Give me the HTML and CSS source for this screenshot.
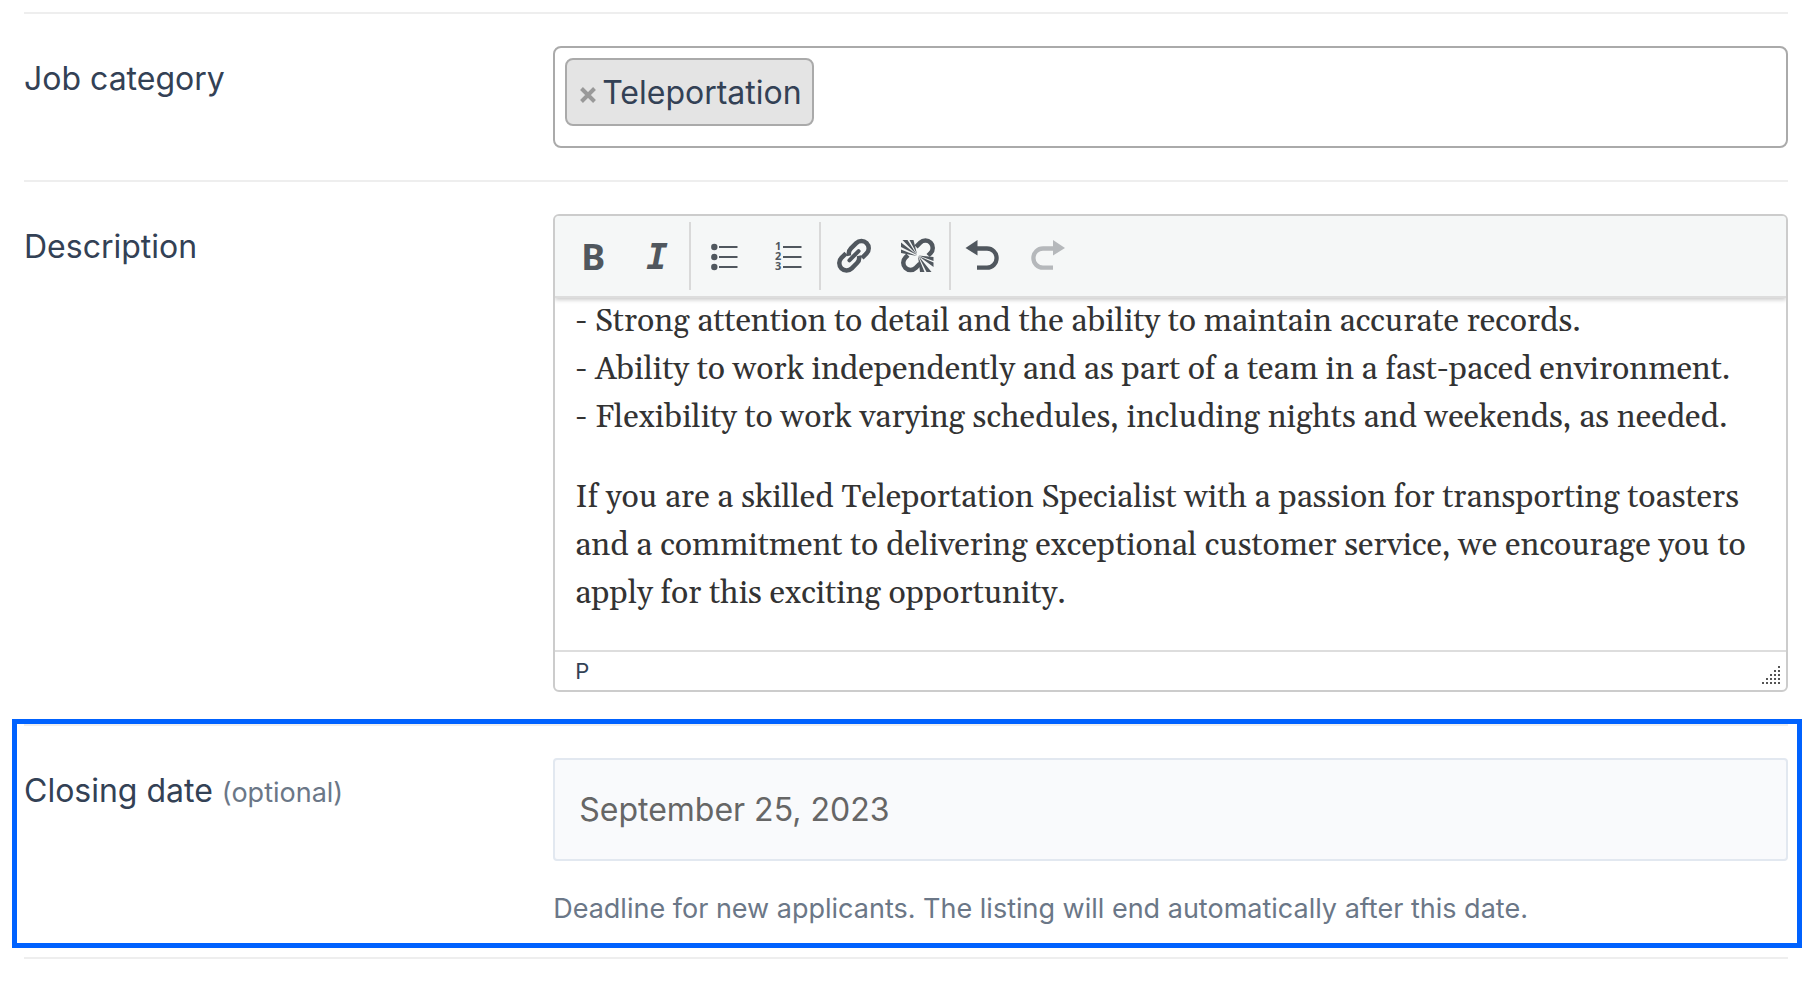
FILE: index.html
```
<!DOCTYPE html>
<html lang="en">
<head>
<meta charset="utf-8">
<title>Job listing</title>
<link rel="stylesheet" href="styles.css">
</head>
<body>
<form class="form">
  <div class="row">
    <span class="label" id="category-label">Job category</span>
    <div class="field">
      <ul class="tags" aria-labelledby="category-label">
        <li class="tag">
          <button class="tag-remove" type="button" aria-label="Remove Teleportation">
            <svg class="tag-icon" viewBox="0 0 16 16"><path d="M1.500 1.500L14.500 14.500M14.500 1.500L1.500 14.500" stroke="#999" stroke-width="4"/></svg>
          </button>
          <span>Teleportation</span>
        </li>
      </ul>
    </div>
  </div>

  <div class="row">
    <span class="label" id="description-label">Description</span>
    <div class="field">
      <div class="editor">
        <div class="toolbar" role="toolbar" aria-label="Formatting">
          <div class="group">
            <button class="tool tool-bold" type="button" aria-label="Bold">B</button>
            <button class="tool tool-italic" type="button" aria-label="Italic">I</button>
          </div>
          <div class="group">
            <button class="tool" type="button" aria-label="Bulleted list">
              <svg class="icon" viewBox="0 0 40 40"><g fill="currentColor"><circle cx="11.300" cy="11" r="3.200"/><circle cx="11.300" cy="21" r="3.200"/><circle cx="11.300" cy="31" r="3.200"/></g><path d="M16 11H34.500M16 21H34.500M16 31H34.500" stroke="currentColor" stroke-width="2"/></svg>
            </button>
            <button class="tool" type="button" aria-label="Numbered list">
              <svg class="icon" viewBox="0 0 40 40"><g class="icon-digits" fill="currentColor"><text x="8" y="14">1</text><text x="8" y="24">2</text><text x="8" y="34">3</text></g><path d="M16 11H34.500M16 21H34.500M16 31H34.500" stroke="currentColor" stroke-width="2"/></svg>
            </button>
          </div>
          <div class="group">
            <button class="tool" type="button" aria-label="Insert link">
              <svg class="icon" viewBox="0 0 40 40"><g transform="translate(21 19.700) rotate(-45)" fill="none" stroke="currentColor" stroke-width="4.500"><path d="M-3.500 -3.500C-2 -6 0 -7.300 3 -7.300H10.500A7.300 7.300 0 0 1 10.500 7.300H4"/><path d="M3.500 3.500C2 6 0 7.300 -3 7.300H-10.500A7.300 7.300 0 0 1 -10.500 -7.300H-4"/><path d="M-6.500 0H6.500" stroke-linecap="round" stroke-width="4"/></g></svg>
            </button>
            <button class="tool" type="button" aria-label="Remove link">
              <svg class="icon" viewBox="0 0 40 40"><g transform="translate(21 19.300) rotate(-45)" fill="none" stroke="currentColor" stroke-width="4.500"><path d="M4.500 -7.300H10.500A7.300 7.300 0 0 1 10.500 7.300H7"/><path d="M-4.500 7.300H-10.500A7.300 7.300 0 0 1 -10.500 -7.300H-7"/></g><path fill="currentColor" d="M20 20L4 17V13.500ZM20 19L4 11V6.500ZM20 19L5.500 4H10.500ZM20 18L12.500 4H16.500ZM21.500 19.500L36.500 21V25ZM21.500 20L36.500 26.500V31ZM21.500 20L34.500 36H29.500ZM21 20L27.500 36H23Z"/></svg>
            </button>
          </div>
          <div class="group">
            <button class="tool" type="button" aria-label="Undo">
              <svg class="icon" viewBox="0 0 40 40"><path fill="currentColor" d="M2.500 12L14.500 4V19.500Z"/><path d="M13 12.500H24A9.600 9.600 0 0 1 24 31.700H14" fill="none" stroke="currentColor" stroke-width="4.300"/></svg>
            </button>
            <button class="tool" type="button" aria-label="Redo" disabled>
              <svg class="icon" viewBox="0 0 40 40"><path fill="currentColor" d="M38 12L26 4V10.300H16V14.700H26V19.500Z"/><path d="M16 12.500A9.600 9.600 0 0 0 16 31.700H26" fill="none" stroke="currentColor" stroke-width="4.300"/></svg>
            </button>
          </div>
        </div>
        <div class="content" role="textbox" aria-multiline="true" aria-labelledby="description-label" contenteditable="true" spellcheck="false">
          <p>- Strong attention to detail and the ability to maintain accurate records.<br>- Ability to work independently and as part of a team in a fast-paced environment.<br>- Flexibility to work varying schedules, including nights and weekends, as needed.</p>
          <p>If you are a skilled Teleportation Specialist with a passion for transporting toasters and a commitment to delivering exceptional customer service, we encourage you to apply for this exciting opportunity.</p>
        </div>
        <div class="status">
          <span>P</span>
          <svg class="grip" viewBox="0 0 18 18"><path fill="#555" d="M16 0h2v2h-2zM12 4h2v2h-2zM16 4h2v2h-2zM8 8h2v2h-2zM12 8h2v2h-2zM16 8h2v2h-2zM4 12h2v2h-2zM8 12h2v2h-2zM12 12h2v2h-2zM16 12h2v2h-2zM0 16h2v2h-2zM4 16h2v2h-2zM8 16h2v2h-2zM12 16h2v2h-2zM16 16h2v2h-2z"/></svg>
        </div>
      </div>
    </div>
  </div>

  <div class="row row-highlight">
    <label class="label" for="closing-date">Closing date <small class="optional">(optional)</small></label>
    <div class="field">
      <input class="date" id="closing-date" type="text" value="September 25, 2023" aria-describedby="closing-help">
      <p class="help" id="closing-help">Deadline for new applicants. The listing will end automatically after this date.</p>
    </div>
  </div>
</form>
</body>
</html>
```

FILE: styles.css
```
* {
  box-sizing: border-box;
}

body {
  margin: 0;
  background: #fff;
  color: #334155;
  font-family: Inter, "Liberation Sans", sans-serif;
  font-size: 32px;
  line-height: 48px;
}

button {
  margin: 0;
  padding: 0;
  border: 0;
  background: none;
  color: inherit;
  font: inherit;
}

.form {
  margin: 12px 26px 0 24px;
  border-top: 2px solid #eee;
}

.row {
  display: grid;
  grid-template-columns: 30% 1fr;
  padding: 32px 0;
  border-bottom: 2px solid #eee;
}

.label {
  padding-top: 9px;
}

.field {
  min-width: 0;
}

.tags {
  display: flex;
  min-height: 102px;
  margin: 0;
  padding: 10px;
  border: 2px solid #aaa;
  border-radius: 8px;
  list-style: none;
}

.tag {
  display: flex;
  align-items: center;
  align-self: flex-start;
  gap: 6px;
  padding: 9px 10px 7px 13px;
  border: 2px solid #aaa;
  border-radius: 8px;
  background: #e4e4e4;
}

.tag-remove {
  display: flex;
  padding-top: 3px;
}

.tag-icon {
  width: 16px;
  height: 16px;
}

.editor {
  border: 2px solid #ccc;
  border-radius: 6px;
  overflow: hidden;
}

.toolbar {
  position: relative;
  display: flex;
  padding: 6px;
  border-bottom: 2px solid #ddd;
  background: #f5f7f7;
  box-shadow: 0 2px 4px rgba(0, 0, 0, 0.2);
  color: #50575e;
}

.group {
  display: flex;
  border-right: 2px solid #d9d9d9;
}

.group:last-child {
  border-right: 0;
}

.tool {
  display: flex;
  align-items: center;
  justify-content: center;
  width: 64px;
  height: 68px;
}

.tool:disabled {
  color: #b5b8bb;
}

.tool-bold {
  font: 700 36px "Noto Sans", sans-serif;
}

.tool-italic {
  font: italic 700 36px "DejaVu Sans Mono", monospace;
}

.icon {
  width: 40px;
  height: 40px;
  overflow: visible;
}

.icon-digits {
  font: 700 11px "Noto Sans", sans-serif;
}

.content {
  padding: 0 20px;
  color: #333;
  font-family: Georgia, Gelasio, "Liberation Serif", serif;
  font-size: 32px;
}

.content p {
  margin: 0 0 32px;
}

.content::after {
  content: "";
  display: table;
}

.status {
  display: flex;
  align-items: flex-end;
  justify-content: space-between;
  padding: 0 6px 0 20px;
  border-top: 2px solid #ddd;
  font-size: 22px;
  line-height: 38px;
}

.grip {
  width: 18px;
  height: 18px;
  margin-bottom: 6px;
}

.row-highlight {
  position: relative;
  padding-bottom: 24px;
}

.row-highlight::after {
  content: "";
  position: absolute;
  top: -7px;
  right: -14px;
  bottom: 9px;
  left: -12px;
  border: 5px solid #0062ff;
  pointer-events: none;
}

.optional,
.help {
  color: #6b7787;
  font-size: 27px;
}

.date {
  display: block;
  width: 100%;
  height: 103px;
  padding: 0 24px;
  border: 2px solid #e2e8f0;
  border-radius: 4px;
  background: #f9fafc;
  color: #666;
  font: inherit;
}

.help {
  margin: 24px 0 0;
}
```
